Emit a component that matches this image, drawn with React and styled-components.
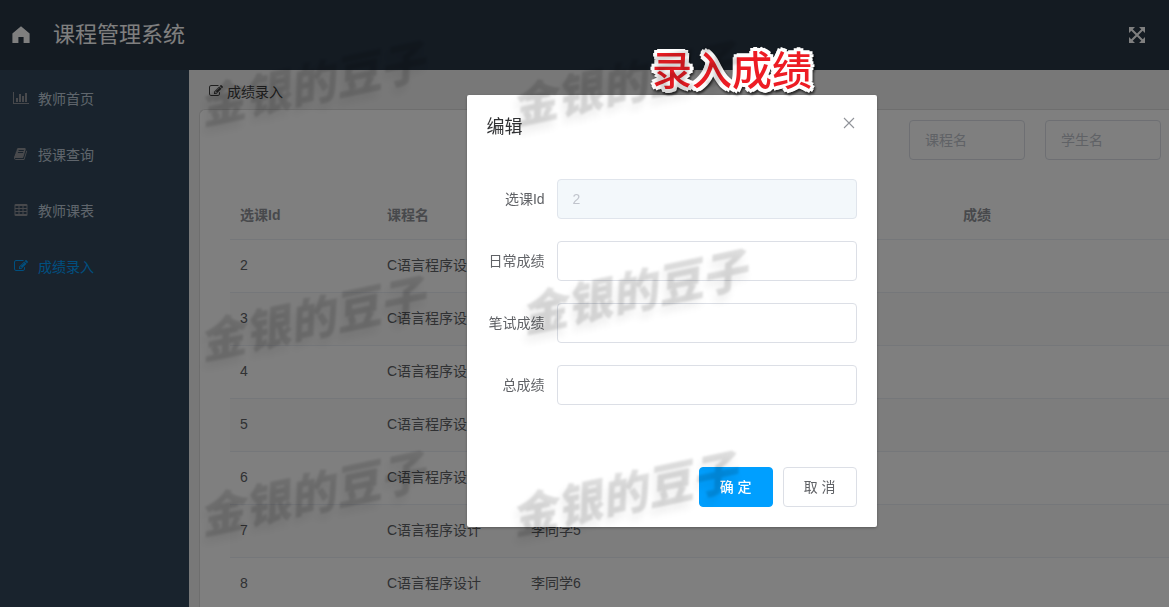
import React, { useState } from 'react';
import styled, { createGlobalStyle, css } from 'styled-components';

const GlobalStyle = createGlobalStyle`
  * {
    box-sizing: border-box;
  }

  body {
    margin: 0;
    font-family: "Liberation Sans", "Noto Sans CJK SC", sans-serif;
    font-size: 14px;
    color: #606266;
    overflow: hidden;
  }

  button, input {
    font-family: inherit;
    font-size: 14px;
  }
`;

const Page = styled.div`
  display: flex;
  flex-direction: column;
  height: 100vh;
  overflow: hidden;
`;

const Header = styled.header`
  display: flex;
  align-items: center;
  flex-shrink: 0;
  height: 70px;
  padding: 0 22px 1px 11px;
  background-color: #283645;
  color: #fff;
`;

const SystemName = styled.h1`
  flex: 1;
  margin: 0 0 0 22px;
  font-size: 22px;
  font-weight: 400;
  line-height: 32px;
`;

const IconButton = styled.button`
  display: flex;
  padding: 0;
  border: none;
  background: none;
  color: inherit;
  cursor: pointer;
`;

const Body = styled.div`
  display: flex;
  flex: 1;
  min-height: 0;
`;

const Sidebar = styled.nav`
  flex-shrink: 0;
  width: 189px;
  background-color: #32475a;
`;

const MenuLink = styled.a`
  display: flex;
  align-items: center;
  gap: 5px;
  height: 56px;
  padding-left: 9px;
  color: ${(props) => (props.$active ? '#009fff' : '#bfcbd9')};
  text-decoration: none;
`;

const MenuIcon = styled.span`
  display: flex;
  justify-content: center;
  width: 24px;
  color: ${(props) => (props.$active ? '#009fff' : '#909399')};
`;

const Content = styled.main`
  flex: 1;
  min-width: 0;
  padding: 10px 0 0 10px;
  background-color: #f0f0f0;
  overflow: hidden;
`;

const Breadcrumb = styled.div`
  display: flex;
  align-items: center;
  gap: 4px;
  height: 22px;
  padding-left: 10px;
  margin-bottom: 7px;
  color: #404040;
`;

const Card = styled.section`
  padding: 10px 0 10px 30px;
  border: 1px solid #ddd;
  border-right: none;
  border-radius: 6px 0 0 0;
  background-color: #fff;
`;

const Filters = styled.form`
  display: flex;
  justify-content: flex-end;
  gap: 20px;
  padding-right: 8px;
  margin-bottom: 31px;
`;

const inputStyle = css`
  height: 40px;
  padding: 0 15px;
  border: 1px solid #dcdfe6;
  border-radius: 4px;
  background-color: #fff;
  color: #606266;
  outline: none;
`;

const FilterInput = styled.input`
  ${inputStyle}
  width: 116px;

  &::placeholder {
    color: #c0c4cc;
  }
`;

const Table = styled.table`
  width: 100%;
  table-layout: fixed;
  border-collapse: separate;
  border-spacing: 0;
  line-height: 24px;
  text-align: left;
`;

const Column = styled.col`
  width: ${(props) => props.$width};
`;

const HeadCell = styled.th`
  height: 49px;
  padding: 0 10px;
  border-bottom: 1px solid #ebeef5;
  color: #909399;
  font-weight: 700;
`;

const Row = styled.tr`
  background-color: ${(props) => (props.$striped ? '#fafafa' : '#fff')};
`;

const Cell = styled.td`
  height: 53px;
  padding: 0 10px 2px;
  border-bottom: 1px solid #ebeef5;
  white-space: nowrap;
`;

const Overlay = styled.div`
  position: fixed;
  inset: 0;
  padding: 95px 0 0 calc(40% - 1px);
  background-color: rgba(0, 0, 0, 0.5);
`;

const Dialog = styled.div`
  width: 410px;
  max-width: 100%;
  border-radius: 2px;
  background-color: #fff;
  box-shadow: 0 1px 3px rgba(0, 0, 0, 0.3);
`;

const DialogHeader = styled.div`
  display: flex;
  justify-content: space-between;
  padding: 20px 20px 10px;
  color: #909399;
`;

const DialogTitle = styled.h2`
  margin: 0;
  color: #303133;
  font-size: 18px;
  font-weight: 400;
  line-height: 24px;
`;

const DialogBody = styled.div`
  padding: 30px 20px;
`;

const FormItem = styled.div`
  display: flex;
  margin-bottom: 22px;
`;

const FormLabel = styled.label`
  flex-shrink: 0;
  width: 70px;
  padding-right: 12px;
  line-height: 40px;
  text-align: right;
`;

const FormInput = styled.input`
  ${inputStyle}
  flex: 1;
  min-width: 0;

  &:disabled {
    border-color: #e0e5ec;
    background-color: #f3f8fb;
    color: #c0c4cc;
  }
`;

const DialogFooter = styled.div`
  display: flex;
  justify-content: flex-end;
  gap: 10px;
  padding: 10px 20px 20px;
`;

const Button = styled.button`
  width: 74px;
  height: 40px;
  padding: 0 0 2px;
  border: 1px solid ${(props) => (props.$primary ? '#009fff' : '#dcdfe6')};
  border-radius: 4px;
  background-color: ${(props) => (props.$primary ? '#009fff' : '#fff')};
  color: ${(props) => (props.$primary ? '#fff' : '#606266')};
  font-weight: ${(props) => (props.$primary ? 500 : 400)};
  cursor: pointer;
`;

const Marks = styled.div`
  position: fixed;
  inset: 0;
  overflow: hidden;
  pointer-events: none;
`;

const Watermark = styled.span`
  position: absolute;
  left: ${(props) => props.$x}px;
  top: ${(props) => props.$y}px;
  transform: translate(-50%, -50%) rotate(-12deg);
  color: rgba(0, 0, 0, 0.13);
  font-size: 46px;
  font-style: italic;
  font-weight: 900;
  line-height: 1;
  white-space: nowrap;
  text-shadow: -4px 6px 8px rgba(0, 0, 0, 0.07);
  filter: blur(1px);
`;

const Caption = styled.strong`
  position: absolute;
  left: 652px;
  top: 51px;
  color: #ed1c24;
  font-size: 40px;
  font-weight: 500;
  line-height: 1;
  white-space: nowrap;
  text-shadow:
    4px 0 #fff, -4px 0 #fff, 0 4px #fff, 0 -4px #fff,
    3px 3px #fff, -3px 3px #fff, 3px -3px #fff, -3px -3px #fff,
    2px 0 #fff, -2px 0 #fff, 0 2px #fff, 0 -2px #fff;
  filter: drop-shadow(1px 2px 1px rgba(0, 0, 0, 0.7));
`;

const paths = {
  chart:
    'M640 896v512h-256v-512h256zm384-512v1024h-256v-1024h256zm1024 1152v128h-2048v-1536h128v1408h1920zm-640-896v768h-256v-768h256zm384-384v1152h-256v-1152h256z',
  book:
    'M1639 478q40 57 18 129l-275 906q-19 64-76.5 107.5t-122.5 43.5h-923q-77 0-148.5-53.5t-99.5-131.5q-24-67-2-127 0-4 3-27t4-37q1-8-3-21.5t-3-19.5q2-11 8-21t16.5-23.5 16.5-23.5q23-38 45-91.5t30-91.5q3-10 .5-30t-.5-28q3-11 17-28t17-23q21-36 42-92t25-90q1-9-2.5-32t.5-28q4-13 22-30.5t22-22.5q19-26 42.5-84.5t27.5-96.5q1-8-3-25.5t-2-26.5q2-8 9-18t18-23 17-21q8-12 16.5-30.5t15-35 16-36 19.5-32 26.5-23.5 36-11.5 47.5 5.5l-1 3q38-9 51-9h761q74 0 114 56t18 130l-274 906q-36 119-71.5 153.5t-128.5 34.5h-869q-27 0-38 15-11 16-1 43 24 70 144 70h923q29 0 56-15.5t35-41.5l300-987q7-22 5-57 38 15 59 43zm-1064 2q-4 13 2 22.5t20 9.5h608q13 0 25.5-9.5t16.5-22.5l21-64q4-13-2-22.5t-20-9.5h-608q-13 0-25.5 9.5t-16.5 22.5zm-83 256q-4 13 2 22.5t20 9.5h608q13 0 25.5-9.5t16.5-22.5l21-64q4-13-2-22.5t-20-9.5h-608q-13 0-25.5 9.5t-16.5 22.5z',
  table:
    'M224 128h1344q160 0 160 160v1216q0 160-160 160h-1344q-160 0-160-160v-1216q0-160 160-160zM192 384v256h384v-256zM704 384v256h384v-256zM1216 384v256h384v-256zM192 768v256h384v-256zM704 768v256h384v-256zM1216 768v256h384v-256zM192 1152v256h384v-256zM704 1152v256h384v-256zM1216 1152v256h384v-256z',
  edit:
    'M888 1184l116-116-152-152-116 116v56h96v96h56zm440-720q-16-16-33 1l-350 350q-17 17-1 33t33-1l350-350q17-17 1-33zm80 594v190q0 119-84.5 203.5t-203.5 84.5h-832q-119 0-203.5-84.5t-84.5-203.5v-832q0-119 84.5-203.5t203.5-84.5h832q63 0 117 25 15 7 18 23 3 17-9 29l-49 49q-14 14-32 8-23-6-45-6h-832q-66 0-113 47t-47 113v832q0 66 47 113t113 47h832q66 0 113-47t47-113v-126q0-13 9-22l64-64q15-15 35-7t20 29zm-96-738l288 288-672 672h-288v-288zm444 132l-92 92-288-288 92-92q28-28 68-28t68 28l152 152q28 28 28 68t-28 68z',
};

const Icon = ({ name, size = 14 }) => {
  const width = name === 'chart' ? 2048 : 1792;
  return (
    <svg width={(size * width) / 1792} height={size} viewBox={`0 0 ${width} 1792`} fill="currentColor" fillRule="evenodd" aria-hidden="true">
      <path d={paths[name]} />
    </svg>
  );
};

const HomeIcon = () => (
  <svg width="20" height="20" viewBox="0 0 20 20" fill="currentColor" aria-hidden="true">
    <path d="M10 1.3 18.6 8.4V18H12.6V12H7.4V18H1.4V8.4Z" />
  </svg>
);

const ExpandIcon = () => (
  <svg width="20" height="20" viewBox="0 0 20 20" fill="currentColor" stroke="currentColor" aria-hidden="true">
    <path d="M4 4 16 16M16 4 4 16" strokeWidth="2" />
    <path d="M2 2H8L2 8ZM18 2V8L12 2ZM2 18V12L8 18ZM18 18H12L18 12Z" stroke="none" />
  </svg>
);

const CloseIcon = () => (
  <svg width="16" height="16" viewBox="0 0 16 16" fill="none" stroke="currentColor" strokeWidth="1.1" aria-hidden="true">
    <path d="M3 3 13 13M13 3 3 13" />
  </svg>
);

const menu = [
  { icon: 'chart', text: '教师首页' },
  { icon: 'book', text: '授课查询' },
  { icon: 'table', text: '教师课表' },
  { icon: 'edit', text: '成绩录入', active: true },
];

const columns = [
  { title: '选课Id', width: '147px' },
  { title: '课程名', width: '144px' },
  { title: '学生名', width: '144px' },
  { title: '日常', width: '144px' },
  { title: '笔试', width: '144px' },
  { title: '成绩', width: 'auto' },
];

const rows = [
  { id: 2 },
  { id: 3 },
  { id: 4 },
  { id: 5 },
  { id: 6 },
  { id: 7, student: '李同学5' },
  { id: 8, student: '李同学6' },
];

const fields = [
  { key: 'id', label: '选课Id', disabled: true },
  { key: 'daily', label: '日常成绩' },
  { key: 'exam', label: '笔试成绩' },
  { key: 'total', label: '总成绩' },
];

const watermarks = [
  { x: 312, y: 85 },
  { x: 624, y: 85 },
  { x: 312, y: 320 },
  { x: 634, y: 293 },
  { x: 312, y: 495 },
  { x: 624, y: 495 },
];

const EditDialog = ({ onClose }) => {
  const [form, setForm] = useState({ id: '2', daily: '', exam: '', total: '' });

  return (
    <Overlay>
      <Dialog role="dialog" aria-labelledby="dialog-title">
        <DialogHeader>
          <DialogTitle id="dialog-title">编辑</DialogTitle>
          <IconButton type="button" aria-label="关闭" onClick={onClose}>
            <CloseIcon />
          </IconButton>
        </DialogHeader>
        <DialogBody>
          {fields.map((field) => (
            <FormItem key={field.key}>
              <FormLabel htmlFor={field.key}>{field.label}</FormLabel>
              <FormInput
                id={field.key}
                value={form[field.key]}
                disabled={field.disabled}
                onChange={(e) => setForm({ ...form, [field.key]: e.target.value })}
              />
            </FormItem>
          ))}
        </DialogBody>
        <DialogFooter>
          <Button type="button" $primary onClick={onClose}>确 定</Button>
          <Button type="button" onClick={onClose}>取 消</Button>
        </DialogFooter>
      </Dialog>
    </Overlay>
  );
};

const App = () => {
  const [editing, setEditing] = useState(true);

  return (
    <>
      <GlobalStyle />
      <Page>
        <Header>
          <HomeIcon />
          <SystemName>课程管理系统</SystemName>
          <IconButton type="button" aria-label="全屏">
            <ExpandIcon />
          </IconButton>
        </Header>
        <Body>
          <Sidebar>
            {menu.map((item) => (
              <MenuLink key={item.text} href="#" $active={item.active}>
                <MenuIcon $active={item.active}>
                  <Icon name={item.icon} />
                </MenuIcon>
                {item.text}
              </MenuLink>
            ))}
          </Sidebar>
          <Content>
            <Breadcrumb>
              <Icon name="edit" />
              成绩录入
            </Breadcrumb>
            <Card>
              <Filters>
                <FilterInput placeholder="课程名" aria-label="课程名" />
                <FilterInput placeholder="学生名" aria-label="学生名" />
              </Filters>
              <Table>
                <colgroup>
                  {columns.map((column) => (
                    <Column key={column.title} $width={column.width} />
                  ))}
                </colgroup>
                <thead>
                  <tr>
                    {columns.map((column) => (
                      <HeadCell key={column.title}>{column.title}</HeadCell>
                    ))}
                  </tr>
                </thead>
                <tbody>
                  {rows.map((row, index) => (
                    <Row key={row.id} $striped={index % 2 === 1}>
                      <Cell>{row.id}</Cell>
                      <Cell>C语言程序设计</Cell>
                      <Cell>{row.student}</Cell>
                      <Cell />
                      <Cell />
                      <Cell />
                    </Row>
                  ))}
                </tbody>
              </Table>
            </Card>
          </Content>
        </Body>
      </Page>
      {editing && <EditDialog onClose={() => setEditing(false)} />}
      <Marks>
        <Caption>录入成绩</Caption>
        {watermarks.map((mark) => (
          <Watermark key={`${mark.x}-${mark.y}`} $x={mark.x} $y={mark.y}>金银的豆子</Watermark>
        ))}
      </Marks>
    </>
  );
};

export default App;
